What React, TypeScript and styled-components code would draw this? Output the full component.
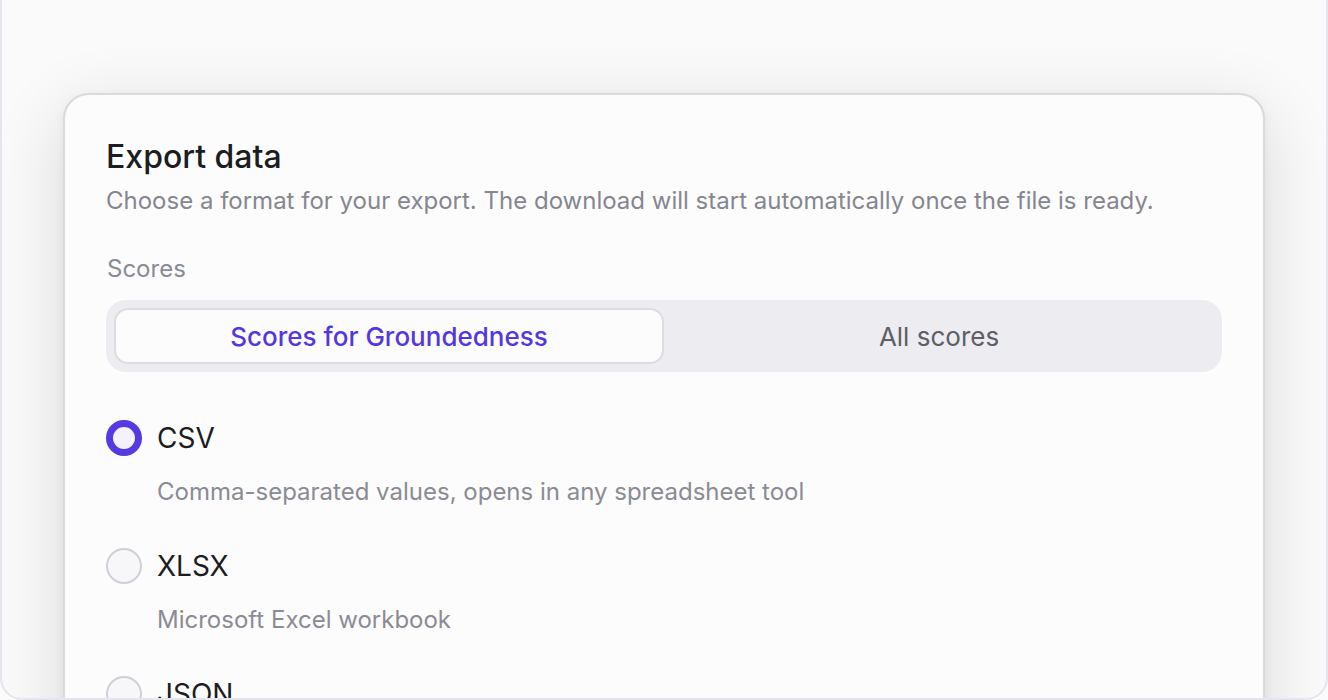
import React, { useState } from "react";
import styled, { createGlobalStyle } from "styled-components";

const GlobalStyle = createGlobalStyle`
  html, body {
    margin: 0;
    padding: 0;
    background: #fbfbfc;
    font-family: Inter, "Noto Sans", "Liberation Sans", sans-serif;
    -webkit-font-smoothing: antialiased;
  }
  * { box-sizing: border-box; }
`;

const Frame = styled.div`
  width: 1328px;
  height: 700px;
  overflow: hidden;
  border: 2px solid #e5e5ed;
  border-top: none;
  border-radius: 0 0 22px 22px;
  background: #fafafa;
  padding: 93px 61px 0 61px;
`;

const Card = styled.section`
  width: 1202px;
  height: 720px;
  background: #fcfcfd;
  border: 2px solid #dadade;
  border-radius: 26px;
  box-shadow: 0 18px 70px rgba(20, 20, 30, 0.14), 0 2px 8px rgba(20, 20, 30, 0.05);
  padding: 42px 41px 0 41px;
  display: flex;
  flex-direction: column;
`;

const Title = styled.h2`
  margin: 0;
  font-size: 32px;
  line-height: 40px;
  font-weight: 500;
  color: #1c1c21;
`;

const Description = styled.p`
  margin: 9px 0 0 0;
  font-size: 24px;
  line-height: 30px;
  color: #85868f;
`;

const FieldLabel = styled.div`
  margin: 38px 0 0 1px;
  font-size: 24px;
  line-height: 30px;
  color: #8a8b93;
`;

const Segmented = styled.div`
  margin-top: 16px;
  height: 72px;
  border-radius: 20px;
  background: #ececf1;
  padding: 8px;
  display: grid;
  grid-template-columns: 1fr 1fr;
`;

const Segment = styled.button<{ $active: boolean }>`
  all: unset;
  display: flex;
  align-items: center;
  justify-content: center;
  border-radius: 14px;
  font-family: inherit;
  font-size: 26px;
  font-weight: ${(p) => (p.$active ? 500 : 400)};
  color: ${(p) => (p.$active ? "#5537df" : "#5d5e66")};
  background: ${(p) => (p.$active ? "#fcfcfd" : "transparent")};
  border: 2px solid ${(p) => (p.$active ? "#dcdce3" : "transparent")};
  cursor: pointer;
`;

const Options = styled.div`
  margin-top: 48px;
  display: flex;
  flex-direction: column;
  gap: 41px;
`;

const Option = styled.label`
  display: grid;
  grid-template-columns: 36px 1fr;
  column-gap: 15px;
  row-gap: 21px;
  align-items: center;
  cursor: pointer;
`;

const Radio = styled.span<{ $checked: boolean }>`
  width: 36px;
  height: 36px;
  border-radius: 50%;
  border: ${(p) => (p.$checked ? "7px solid #5639e0" : "2px solid #cfcfd9")};
  background: ${(p) => (p.$checked ? "#f4f2fe" : "#f7f7fa")};
`;

const OptionName = styled.span`
  font-size: 28px;
  line-height: 36px;
  color: #1c1c21;
`;

const OptionHint = styled.span`
  grid-column: 2;
  font-size: 24px;
  line-height: 30px;
  color: #8a8b93;
`;

const formats = [
  { id: "csv", name: "CSV", hint: "Comma-separated values, opens in any spreadsheet tool" },
  { id: "xlsx", name: "XLSX", hint: "Microsoft Excel workbook" },
  { id: "json", name: "JSON", hint: "Structured data for programmatic use" },
];

export default function App() {
  const [scope, setScope] = useState<"ground" | "all">("ground");
  const [format, setFormat] = useState("csv");

  return (
    <>
      <GlobalStyle />
      <Frame>
        <Card>
          <Title>Export data</Title>
          <Description>
            Choose a format for your export. The download will start automatically once the file is ready.
          </Description>
          <FieldLabel>Scores</FieldLabel>
          <Segmented>
            <Segment $active={scope === "ground"} onClick={() => setScope("ground")}>
              Scores for Groundedness
            </Segment>
            <Segment $active={scope === "all"} onClick={() => setScope("all")}>
              All scores
            </Segment>
          </Segmented>
          <Options>
            {formats.map((f) => (
              <Option key={f.id} onClick={() => setFormat(f.id)}>
                <Radio $checked={format === f.id} />
                <OptionName>{f.name}</OptionName>
                <OptionHint>{f.hint}</OptionHint>
              </Option>
            ))}
          </Options>
        </Card>
      </Frame>
    </>
  );
}
